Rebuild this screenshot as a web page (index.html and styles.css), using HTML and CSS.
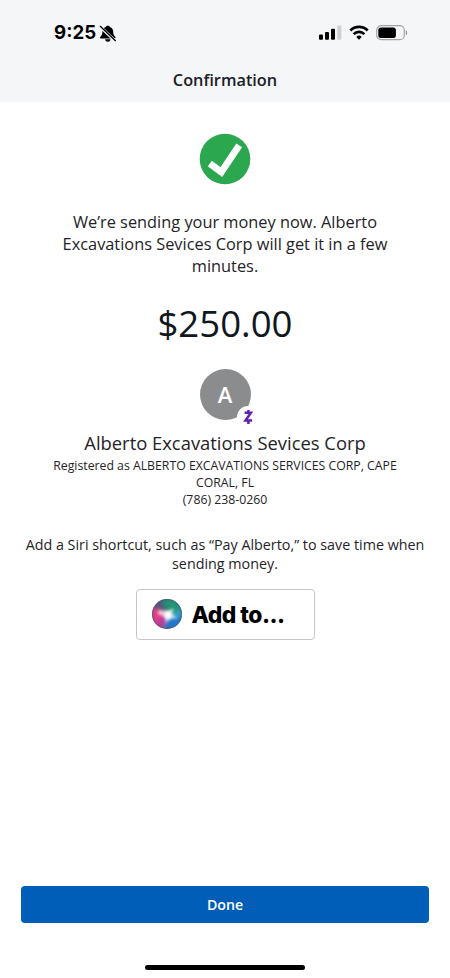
FILE: index.html
```html
<!DOCTYPE html>
<html lang="en">
<head>
<meta charset="utf-8">
<title>Confirmation</title>
<link rel="stylesheet" href="styles.css">
</head>
<body>
<header class="top">
  <div class="status">
    <div class="clock"><span class="time">9:25</span>
      <svg class="bell" width="18" height="17" viewBox="0 0 17 16">
        <path d="M8.300 .6c-1 0-1.700.5-1.900 1.200C4.200 2.500 3.200 4.200 3.200 6.400c0 2.600-.7 3.600-1.900 4.600-.7.700-.3 1.700.6 1.700h12.800c.9 0 1.300-1 .6-1.700-1.200-1-1.900-2-1.900-4.600 0-2.200-1-3.900-3.200-4.600-.2-.7-.9-1.200-1.900-1.200z"/>
        <path d="M5.800 13.400h5a2.500 2.300 0 0 1-5 0z"/>
        <path d="M1 1.500l14.500 13.700" stroke="#f5f6f8" stroke-width="2.800"/>
        <path d="M1.200 1.200l14.300 13.600" stroke="#000" stroke-width="1.200" stroke-linecap="round"/>
      </svg>
    </div>
    <div class="signals">
      <svg width="23" height="16" viewBox="0 0 23 16">
        <rect x="0" y="9.500" width="4" height="5.300" rx="1"/>
        <rect x="6" y="7" width="4" height="7.800" rx="1"/>
        <rect x="12" y="3.800" width="4" height="11" rx="1"/>
        <rect x="18.300" y="0.500" width="4" height="14.300" rx="1" fill="#cfd0d2"/>
      </svg>
      <svg width="20" height="16" viewBox="0 0 20 16" fill="none" stroke="#000" stroke-width="2.700">
        <path d="M1.300 5.500a12.300 12.300 0 0 1 17.400 0"/>
        <path d="M4.700 9.100a7.500 7.500 0 0 1 10.600 0"/>
        <path d="M10 14.800l-2.700-2.900a3.800 3.800 0 0 1 5.400 0z" fill="#000" stroke="none"/>
      </svg>
      <svg width="32" height="16" viewBox="0 0 32 16">
        <rect x=".7" y=".7" width="27.600" height="14" rx="4.500" fill="none" stroke="#a4a5a7" stroke-width="1.200"/>
        <rect x="2.300" y="2.400" width="17.600" height="10.600" rx="2.800"/>
        <path d="M29.800 5.200c1.800.6 1.800 4.400 0 5z" fill="#8f9092"/>
      </svg>
    </div>
  </div>
  <h1 class="title">Confirmation</h1>
</header>
<main class="content">
  <svg class="check" width="52" height="52" viewBox="0 0 52 52">
    <circle cx="26" cy="26" r="25.300" fill="#2ba84f"/>
    <path d="M10.800 30.500L22.300 39.100 40.200 12.300" fill="none" stroke="#fff" stroke-width="6.900"/>
  </svg>
  <p class="message">We’re sending your money now. Alberto<br>Excavations Sevices Corp will get it in a few<br>minutes.</p>
  <p class="amount">$250.00</p>
  <div class="avatar"><span>A</span>
    <svg class="badge" width="22" height="22" viewBox="0 0 22 22">
      <circle cx="11" cy="11" r="11" fill="#fff"/>
      <path d="M7.600 6.800h6.300L8.500 14.600h6.600M11.400 3.900v3M11.400 14.600v3.300" fill="none" stroke="#6220b8" stroke-width="2.500"/>
    </svg>
  </div>
  <h2 class="name">Alberto Excavations Sevices Corp</h2>
  <p class="details">Registered as ALBERTO EXCAVATIONS SERVICES CORP, CAPE<br>CORAL, FL<br>(786) 238-0260</p>
  <p class="hint">Add a Siri shortcut, such as “Pay Alberto,” to save time when<br>sending money.</p>
  <button class="siri">
    <svg class="orb" width="30" height="30" viewBox="0 0 30 30">
      <defs>
        <clipPath id="disc"><circle cx="15" cy="15" r="15"/></clipPath>
        <filter id="soft" x="-50%" y="-50%" width="200%" height="200%"><feGaussianBlur stdDeviation="2"/></filter>
        <filter id="glow" x="-50%" y="-50%" width="200%" height="200%"><feGaussianBlur stdDeviation="1.800"/></filter>
      </defs>
      <g clip-path="url(#disc)">
        <rect width="30" height="30" fill="#54557c"/>
        <g filter="url(#soft)">
          <path d="M9 0h21v13l-14 2z" fill="#239374"/>
          <path d="M30 10v10l-14-4z" fill="#38a7c2"/>
          <path d="M30 18v12H12l3-14z" fill="#2378c8"/>
          <path d="M0 9l15 6-4 14-11-3z" fill="#c63b9b"/>
          <path d="M0 7l15 8-14 7z" fill="#ec4081"/>
        </g>
        <path d="M6 11l9 1 7-3-2 6 6 4-8 1-4 4-1-6-7-3z" fill="#fff" opacity=".7" filter="url(#glow)"/>
        <circle cx="16" cy="16" r="3.500" fill="#fff" filter="url(#glow)"/>
        <circle cx="15" cy="15" r="14.500" fill="none" stroke="#4c4a7c" stroke-opacity=".4"/>
      </g>
    </svg>
    <span class="siri-label">Add to...</span>
  </button>
</main>
<footer class="bottom">
  <button class="done">Done</button>
  <div class="home"></div>
</footer>
</body>
</html>
```
FILE: styles.css
```css
* { box-sizing: border-box; margin: 0; padding: 0; }
body {
  width: 450px;
  height: 978px;
  display: flex;
  flex-direction: column;
  background: #fff;
  color: #1f2328;
  font-family: "Open Sans", sans-serif;
  overflow: hidden;
}
p, h1, h2 { white-space: nowrap; text-align: center; }
button { font: inherit; border: 0; }
svg { display: block; }
.top { height: 102px; background: #f5f6f8; }
.status {
  height: 66px;
  padding: 0 42px 0 54px;
  display: flex;
  align-items: center;
  justify-content: space-between;
}
.clock { display: flex; align-items: center; gap: 3px; }
.time { font: 700 18.700px/24px Inter, sans-serif; color: #000; }
.signals { display: flex; align-items: center; gap: 7px; }
.title { font-size: 16.300px; font-weight: 600; line-height: 28px; color: #1b2026; }
.content { flex: 1; display: flex; flex-direction: column; align-items: center; }
.check { margin-top: 31px; }
.message { margin-top: 26px; font-size: 16.350px; line-height: 22.200px; }
.amount { margin-top: 19px; font-size: 36.600px; line-height: 52px; color: #11171d; }
.avatar {
  position: relative;
  width: 51px;
  height: 51px;
  margin-top: 20px;
  border-radius: 50%;
  background: #8b8c8e;
  color: #fff;
  font-size: 22px;
  font-weight: 600;
  line-height: 51px;
  text-align: center;
}
.badge { position: absolute; left: 37px; top: 37px; }
.name { margin-top: 10px; font-size: 18.400px; font-weight: 400; line-height: 26px; }
.details { margin-top: 1px; font-size: 12.270px; line-height: 17.300px; }
.hint { margin-top: 26px; font-size: 14.320px; line-height: 19.500px; }
.siri {
  width: 179px;
  height: 51px;
  margin-top: 15px;
  padding-left: 15px;
  display: flex;
  align-items: center;
  gap: 10px;
  border: 1px solid #c6c6c8;
  border-radius: 4px;
  background: #fff;
}
.siri-label { padding-top: 1px; font: 800 22.800px/30px Inter, sans-serif; letter-spacing: -0.500px; color: #000; }
.bottom { height: 92px; padding: 0 21px; }
.done {
  display: block;
  width: 408px;
  height: 37px;
  border-radius: 4px;
  background: #005eb8;
  color: #fff;
  font-size: 14.200px;
  font-weight: 600;
}
.home { width: 160px; height: 5px; margin: 42px auto 0; border-radius: 3px; background: #000; }
```
